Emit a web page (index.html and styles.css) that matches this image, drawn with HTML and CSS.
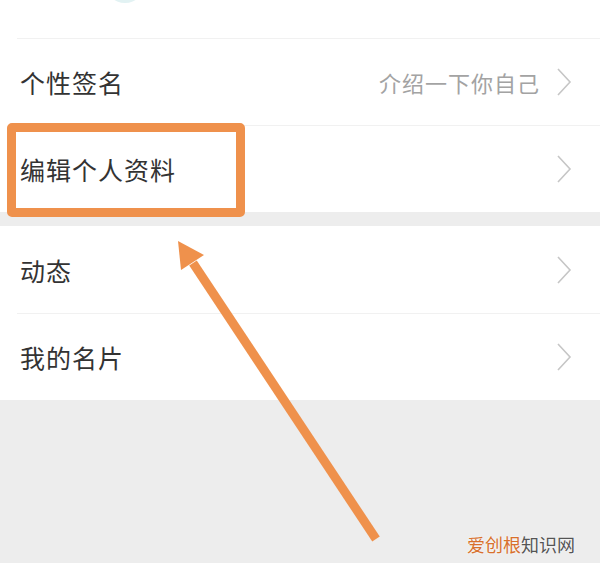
FILE: index.html
```html
<!DOCTYPE html>
<html lang="zh-CN">
<head>
    <meta charset="UTF-8">
    <title>个人资料</title>
    <link rel="stylesheet" href="styles.css">
</head>
<body>
    <div class="page">
        <div class="group">
            <div class="row row-top">
                <span class="avatar"></span>
            </div>
            <div class="row">
                <span class="label">个性签名</span>
                <span class="value">介绍一下你自己</span>
                <svg class="chevron" width="16" height="30" viewBox="0 0 16 30"><polyline points="2,2 14,15 2,28" /></svg>
            </div>
            <div class="row">
                <span class="label">编辑个人资料</span>
                <svg class="chevron" width="16" height="30" viewBox="0 0 16 30"><polyline points="2,2 14,15 2,28" /></svg>
            </div>
        </div>

        <div class="group">
            <div class="row">
                <span class="label">动态</span>
                <svg class="chevron" width="16" height="30" viewBox="0 0 16 30"><polyline points="2,2 14,15 2,28" /></svg>
            </div>
            <div class="row">
                <span class="label">我的名片</span>
                <svg class="chevron" width="16" height="30" viewBox="0 0 16 30"><polyline points="2,2 14,15 2,28" /></svg>
            </div>
        </div>

        <!-- annotation overlay -->
        <div class="mark-box"></div>
        <svg class="mark-arrow" width="600" height="563" viewBox="0 0 600 563">
            <line x1="376" y1="539" x2="193" y2="263" />
            <polygon points="178,241 204,255 181,270" />
        </svg>

        <div class="watermark"><span class="wm-accent">爱创根</span>知识网</div>
    </div>
</body>
</html>
```

FILE: styles.css
```css
body {
    margin: 0;
    background: #ededed;
    font-family: "Noto Sans CJK SC", "Noto Sans", sans-serif;
}

.page {
    position: relative;
    width: 600px;
    height: 563px;
    overflow: hidden;
}

.group {
    background: #fff;
    margin-bottom: 14px;
}

.row {
    position: relative;
    display: flex;
    align-items: center;
    height: 87px;
    padding: 0 28px 0 20px;
}

.row + .row::before {
    content: '';
    position: absolute;
    top: 0;
    left: 17px;
    right: 0;
    height: 1px;
    background: #f1f1f1;
}

.row-top {
    height: 38px;
    align-items: flex-end;
    overflow: hidden;
}

.avatar {
    width: 40px;
    height: 40px;
    margin: 0 0 35px 85px;
    border-radius: 50%;
    background: #e2f2f3;
}

.label {
    flex: 1;
    font-size: 25px;
    color: #333;
    letter-spacing: 1px;
}

.value {
    font-size: 22px;
    color: #a3a3a3;
    margin-right: 16px;
    letter-spacing: 1px;
}

.chevron polyline {
    fill: none;
    stroke: #c6c6c6;
    stroke-width: 1.6;
}

.mark-box {
    position: absolute;
    left: 7px;
    top: 123px;
    width: 220px;
    height: 76px;
    border: 9px solid #ef914c;
    border-radius: 5px;
}

.mark-arrow {
    position: absolute;
    left: 0;
    top: 0;
}

.mark-arrow line {
    stroke: #ef914c;
    stroke-width: 9;
}

.mark-arrow polygon {
    fill: #ef914c;
}

.watermark {
    position: absolute;
    left: 467px;
    top: 531px;
    font-size: 18px;
    color: #555;
    text-shadow: 0 0 2px #fff;
}

.wm-accent {
    color: #d8702c;
}
```
